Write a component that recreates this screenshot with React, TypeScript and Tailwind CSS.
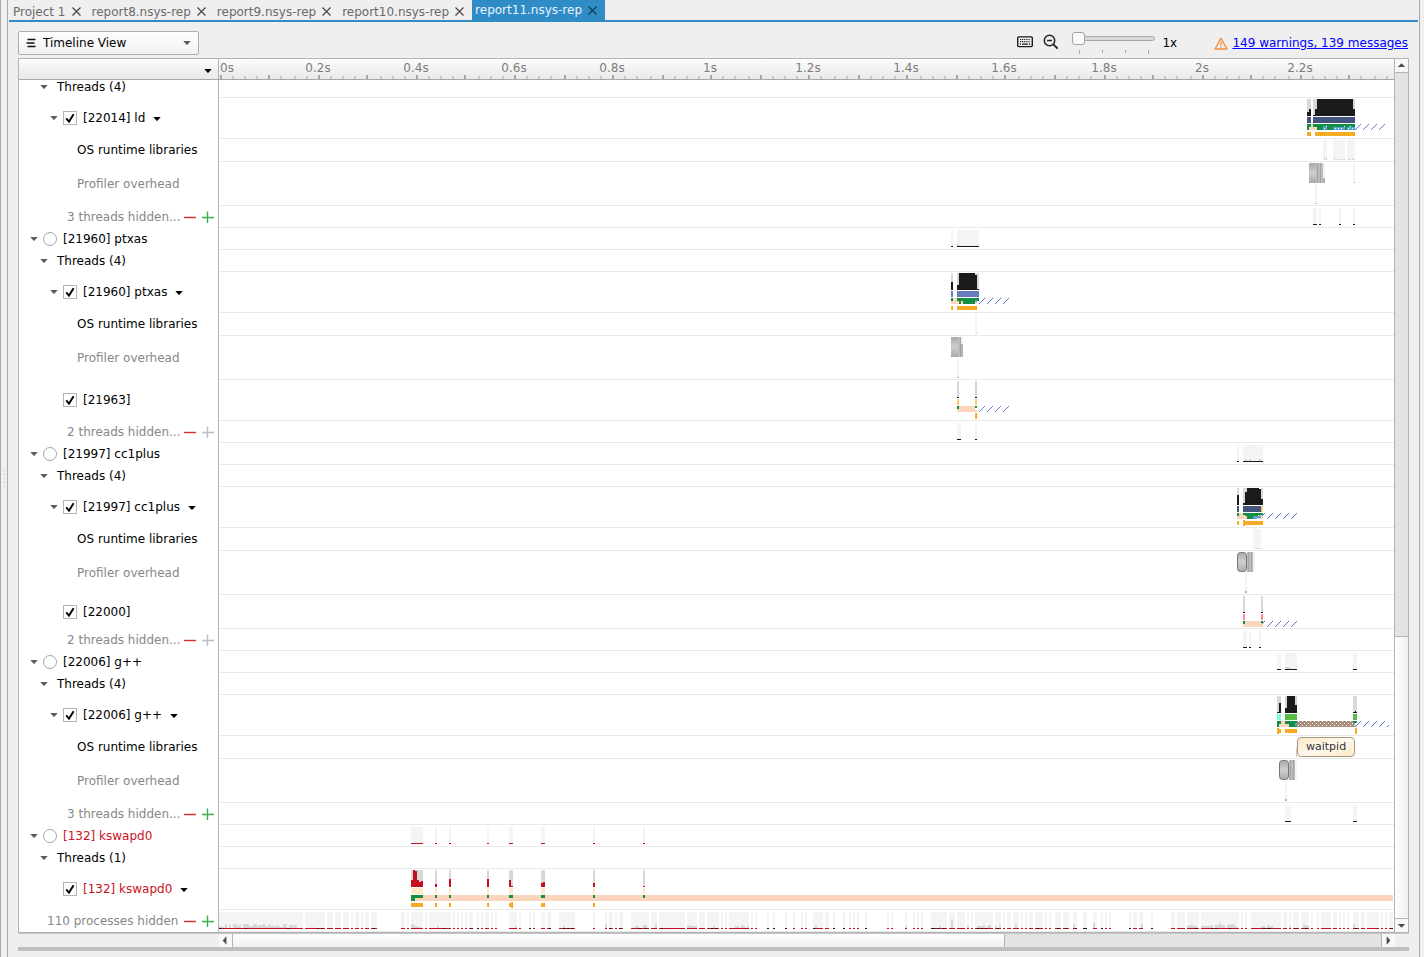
import React from "react";

const SHADE = "#f4f4f4";
const GREY = "#d8d8d8";
const BLACK = "#1a1a1a";
const RED = "#c50f1f";
const GREEN = "#138f45";
const PEACH = "#fcd5bd";
const BLUE = "#5c9fd2";
const NAVY = "#45547f";
const BEIGE = "#d8cdb8";
const HATCH = "#6577d6";
const SAMPLES = "url(#samples)";
const METAL = "url(#metal)";
const LINES = "url(#metal-lines)";

/** x, y, width, height, fill */
type Block = [number, number, number, number, string];
type Kind = "process" | "group" | "thread" | "leaf" | "muted" | "hidden" | "total";

interface Row {
  kind: Kind;
  label: string;
  size: string;
  red?: boolean;
  expandable?: boolean;
  menu?: boolean;
  plusOff?: boolean;
  blocks?: Block[];
  hatches?: number[];
  capsule?: number;
  tip?: string;
}

const at = (origin: number, blocks: Block[]): Block[] =>
  blocks.map(([x, y, w, h, f]) => [x + origin, y, w, h, f]);

/** Activity summary: a shaded column with a one-pixel base line. */
const summary = (origin: number, spans: [number, number][], base = BLACK): Block[] =>
  spans.flatMap(([a, b]): Block[] => [
    [origin + a, 2, b - a, 16, SHADE],
    [origin + a, 18, b - a, 1, base],
  ]);

const dots = (xs: number[], y: number, color: string): Block[] =>
  xs.map((x): Block => [x, y, 1, 1, color]);

const LD = 1071;
const PTXAS = 711;
const CC1 = 1001;
const GPP = 1041;
const SWAP = 181;

const swapSpans: [number, number][] = [
  [11, 23], [35, 37], [49, 51], [87, 89], [109, 113], [141, 145], [193, 195], [243, 245],
];

const totalSpans: [number, number][] = [
  [0, 84], [86, 106], [108, 114], [116, 122], [124, 130], [132, 134], [136, 140], [142, 144], [146, 150], [152, 158],
  [182, 186], [188, 190], [192, 204], [206, 208], [210, 232], [234, 236], [238, 240], [242, 244], [246, 248], [250, 254],
  [258, 260], [262, 264], [266, 270], [272, 274], [276, 278], [290, 298], [300, 302], [310, 312], [314, 316], [322, 326],
  [328, 332], [340, 356], [374, 376], [386, 388], [390, 394], [396, 398], [400, 404], [412, 430], [432, 438], [440, 466],
  [468, 478], [480, 486], [488, 500], [502, 504], [506, 508], [510, 530], [532, 534], [536, 538], [548, 550], [554, 556],
  [566, 568], [574, 576], [582, 584], [586, 588], [594, 604], [606, 610], [614, 616], [624, 626], [630, 632], [634, 636],
  [638, 640], [646, 648], [668, 670], [672, 674], [686, 688], [694, 696], [698, 700], [702, 704], [712, 728], [730, 736],
  [738, 746], [748, 750], [752, 754], [756, 774], [776, 782], [784, 786], [788, 792], [794, 800], [802, 804], [806, 808],
  [810, 814], [816, 824], [826, 828], [830, 832], [836, 842], [844, 850], [854, 858], [864, 868], [874, 878], [882, 884],
  [886, 888], [890, 892], [910, 912], [914, 918], [920, 924], [932, 934], [952, 956], [958, 966], [968, 980], [982, 1020],
  [1022, 1024], [1026, 1028], [1032, 1062], [1064, 1068], [1070, 1072], [1074, 1080], [1082, 1090], [1092, 1094],
  [1098, 1100], [1102, 1112], [1114, 1118], [1120, 1122], [1124, 1126], [1128, 1130], [1134, 1140], [1142, 1146],
  [1148, 1160], [1162, 1164], [1166, 1168], [1170, 1174],
];

const totalBlack: [number, number][] = [
  [0, 2], [26, 28], [68, 70], [98, 100], [102, 104], [154, 156], [224, 226], [252, 254], [258, 260], [310, 312],
  [330, 332], [344, 346], [348, 350], [352, 354], [390, 392], [400, 402], [420, 422], [426, 428], [442, 444], [492, 494],
  [496, 498], [548, 550], [554, 556], [566, 568], [594, 596], [614, 616], [624, 626], [646, 648], [712, 716], [718, 720],
  [724, 726], [758, 760], [762, 764], [766, 768], [778, 780], [818, 820], [838, 840], [846, 848], [856, 858], [864, 868],
  [882, 884], [910, 912], [932, 934], [976, 978], [992, 994], [996, 998], [1010, 1012], [1044, 1046], [1048, 1052],
  [1076, 1078], [1086, 1088], [1136, 1138], [1172, 1174],
];

/** x, width, height of the load bumps that stand on the base line */
const totalBumps: [number, number, number][] = [
  [0, 2, 2], [2, 4, 1], [6, 2, 4], [10, 2, 3], [14, 4, 4], [18, 2, 2], [20, 2, 3], [24, 6, 4], [30, 4, 2], [34, 4, 4],
  [38, 2, 2], [40, 4, 3], [44, 2, 4], [46, 4, 2], [50, 2, 4], [52, 6, 2], [58, 2, 3], [60, 4, 1], [64, 4, 4], [70, 8, 3],
  [92, 2, 1], [192, 2, 4], [194, 2, 3], [196, 2, 2], [198, 4, 1], [218, 2, 2], [296, 2, 2], [344, 2, 2], [386, 2, 4],
  [416, 4, 2], [424, 4, 3], [436, 2, 4], [468, 2, 2], [470, 2, 3], [472, 6, 2], [494, 2, 2], [516, 4, 2], [522, 2, 3],
  [524, 2, 2], [528, 2, 2], [596, 2, 2], [686, 2, 2], [720, 2, 2], [732, 2, 9], [748, 2, 2], [758, 6, 2], [764, 2, 3],
  [768, 2, 2], [770, 2, 3], [776, 2, 2], [780, 2, 3], [796, 2, 4], [854, 2, 4], [874, 2, 5], [922, 2, 4], [968, 2, 2],
  [970, 4, 3], [974, 4, 2], [982, 10, 2], [992, 2, 3], [996, 4, 3], [1000, 2, 5], [1002, 4, 3], [1008, 2, 3], [1010, 6, 4],
  [1016, 2, 2], [1042, 4, 2], [1048, 2, 3], [1050, 4, 2], [1070, 2, 2], [1084, 4, 3], [1088, 2, 2], [1134, 2, 4],
];

const rows: Row[] = [
  { kind: "group", label: "Threads (4)", size: "h-[18px]" },
  {
    kind: "thread", label: "[22014] ld", size: "h-[41px]", expandable: true, menu: true,
    blocks: at(LD, [
      [17, 1, 4, 17, GREY], [17, 14, 2, 4, BLACK], [19, 11, 2, 7, BLACK],
      [23, 1, 4, 17, GREY], [23, 17, 2, 1, BLACK], [25, 11, 2, 7, BLACK], [27, 1, 36, 17, BLACK],
      [63, 1, 2, 10, GREY], [63, 11, 2, 7, BLACK],
      [17, 19, 4, 6, NAVY], [23, 19, 42, 6, NAVY],
      [17, 26, 48, 6, GREEN], [21, 26, 2, 6, PEACH], [19, 29, 8, 3, PEACH],
      [33, 28, 4, 4, BLUE], [43, 29, 12, 3, BLUE], [57, 29, 8, 3, BLUE], [59, 28, 2, 1, BLUE],
      ...dots([34, 45, 48, 51, 58, 62], 30, "#fff"), ...dots([36, 54, 60], 28, "#fff"),
      [17, 34, 4, 4, SAMPLES], [25, 34, 40, 4, SAMPLES],
    ]),
    hatches: [1136, 1144, 1152, 1160],
  },
  {
    kind: "leaf", label: "OS runtime libraries", size: "h-[23px]",
    blocks: at(LD, [
      [33, 1, 4, 20, SHADE], [43, 1, 12, 20, SHADE], [57, 1, 8, 20, SHADE],
      [34, 19, 1, 2, BEIGE], [36, 18, 1, 3, BEIGE], [62, 19, 1, 2, BEIGE],
      ...dots([44, 46, 48, 50, 52, 54, 58, 60, 64], 20, BEIGE),
    ]),
  },
  {
    kind: "muted", label: "Profiler overhead", size: "h-[44px]",
    blocks: at(LD, [
      [19, 1, 7, 20, METAL], [26, 1, 7, 20, LINES], [33, 1, 2, 15, SHADE], [33, 16, 2, 5, "#b0b0b0"],
      [63, 1, 2, 20, SHADE], [64, 20, 1, 1, "#aaa"], [25, 22, 2, 20, SHADE], [25, 41, 2, 1, "#bbb"],
    ]),
  },
  { kind: "hidden", label: "3 threads hidden...", size: "h-[22px]", blocks: summary(LD, [[23, 27], [29, 31], [49, 51], [63, 65]]) },
  {
    kind: "process", label: "[21960] ptxas", size: "h-[22px]",
    blocks: [...summary(PTXAS, [[21, 23], [27, 49]]), ...at(PTXAS, [[27, 16, 2, 2, GREY], [29, 17, 2, 1, GREY], [45, 17, 2, 1, GREY]])],
  },
  { kind: "group", label: "Threads (4)", size: "h-[22px]" },
  {
    kind: "thread", label: "[21960] ptxas", size: "h-[41px]", expandable: true, menu: true,
    blocks: at(PTXAS, [
      [21, 1, 2, 9, GREY], [21, 10, 2, 8, BLACK], [27, 1, 2, 12, GREY], [27, 13, 2, 5, BLACK], [29, 1, 16, 17, BLACK],
      [45, 1, 4, 16, GREY], [45, 3, 2, 15, BLACK], [47, 17, 2, 1, BLACK],
      [21, 19, 2, 6, "#657dc0"], [27, 19, 22, 6, "#657dc0"],
      [21, 26, 26, 6, PEACH], [21, 26, 2, 3, GREEN], [27, 26, 22, 3, GREEN], [29, 29, 2, 3, GREEN], [33, 29, 12, 3, GREEN],
      [45, 28, 2, 2, BLUE], [21, 34, 2, 4, SAMPLES], [27, 34, 20, 4, SAMPLES],
    ]),
    hatches: [760, 768, 776, 784],
  },
  { kind: "leaf", label: "OS runtime libraries", size: "h-[23px]", blocks: at(PTXAS, [[45, 1, 2, 20, SHADE], [46, 20, 1, 1, BEIGE]]) },
  {
    kind: "muted", label: "Profiler overhead", size: "h-[44px]",
    blocks: at(PTXAS, [
      [21, 1, 7, 20, METAL], [28, 1, 3, 20, LINES], [31, 1, 2, 7, SHADE], [31, 8, 2, 13, "#b4b4b4"],
      [27, 22, 2, 20, SHADE], [27, 41, 2, 1, "#bbb"],
    ]),
  },
  {
    kind: "thread", label: "[21963]", size: "h-[41px]",
    blocks: at(PTXAS, [
      [27, 1, 2, 16, GREY], [27, 17, 2, 1, BLACK], [45, 1, 2, 16, GREY], [45, 17, 2, 1, BLACK],
      [27, 19, 2, 6, "#ffca70"], [45, 19, 2, 6, "#ffca70"], [27, 26, 20, 6, PEACH], [27, 26, 2, 3, GREEN],
      [45, 26, 2, 2, GREEN], [45, 28, 2, 2, "#fff"], [45, 33, 2, 6, SAMPLES],
    ]),
    hatches: [760, 768, 776, 784],
  },
  { kind: "hidden", label: "2 threads hidden...", size: "h-[22px]", plusOff: true, blocks: summary(PTXAS, [[27, 31], [45, 47]]) },
  {
    kind: "process", label: "[21997] cc1plus", size: "h-[22px]",
    blocks: [...summary(CC1, [[17, 19], [23, 43]]), ...at(CC1, [[25, 16, 2, 2, GREY], [29, 16, 2, 2, GREY], [39, 16, 2, 2, GREY]])],
  },
  { kind: "group", label: "Threads (4)", size: "h-[22px]" },
  {
    kind: "thread", label: "[21997] cc1plus", size: "h-[41px]", expandable: true, menu: true,
    blocks: at(CC1, [
      [17, 1, 2, 7, GREY], [17, 8, 2, 10, BLACK], [23, 1, 4, 17, GREY], [23, 16, 2, 2, BLACK], [25, 5, 2, 13, BLACK],
      [27, 1, 12, 17, BLACK], [39, 2, 2, 16, BLACK], [41, 1, 2, 11, GREY], [41, 12, 2, 6, BLACK],
      [17, 19, 2, 6, NAVY], [23, 19, 18, 6, NAVY], [41, 19, 2, 6, "#ffca70"],
      [17, 26, 26, 6, PEACH], [17, 26, 2, 3, GREEN], [23, 26, 20, 2, GREEN], [25, 28, 16, 1, GREEN], [27, 28, 6, 4, GREEN],
      [33, 29, 8, 2, BLUE], [33, 31, 4, 1, BLUE], ...dots([38, 40, 42], 28, "#fff"),
      ...dots([42], 28, HATCH), ...dots([43], 27, HATCH), ...dots([44], 26, HATCH),
      [17, 34, 2, 4, SAMPLES], [23, 33, 2, 6, SAMPLES], [25, 34, 18, 4, SAMPLES],
    ]),
    hatches: [1048, 1056, 1064, 1072],
  },
  {
    kind: "leaf", label: "OS runtime libraries", size: "h-[23px]",
    blocks: at(CC1, [[33, 1, 8, 20, SHADE], ...dots([34, 36, 38, 40], 20, BEIGE)]),
  },
  {
    kind: "muted", label: "Profiler overhead", size: "h-[44px]", capsule: 1018,
    blocks: at(CC1, [[27, 1, 6, 20, LINES], [33, 1, 2, 20, SHADE], [25, 22, 2, 20, SHADE], [25, 40, 2, 2, "#b4b4b4"]]),
  },
  {
    kind: "thread", label: "[22000]", size: "h-[34px]",
    blocks: at(CC1, [
      [23, 1, 2, 16, GREY], [23, 17, 2, 1, BLACK], [41, 1, 2, 16, GREY], [41, 17, 2, 1, BLACK],
      [23, 19, 2, 6, "#ff8b92"], [41, 19, 2, 6, "#ff8b92"], [23, 26, 20, 6, PEACH], [23, 26, 2, 3, GREEN], [41, 26, 2, 2, GREEN],
      ...dots([42], 28, HATCH), ...dots([43], 27, HATCH), ...dots([44], 26, HATCH),
    ]),
    hatches: [1048, 1056, 1064, 1072],
  },
  { kind: "hidden", label: "2 threads hidden...", size: "h-[22px]", plusOff: true, blocks: summary(CC1, [[23, 27], [29, 31], [39, 41]]) },
  {
    kind: "process", label: "[22006] g++", size: "h-[22px]",
    blocks: [...summary(GPP, [[17, 21], [25, 37], [93, 97]]), ...at(GPP, [[25, 16, 4, 2, GREY], [29, 17, 2, 1, GREY], [93, 17, 2, 1, GREY]])],
  },
  { kind: "group", label: "Threads (4)", size: "h-[22px]" },
  {
    kind: "thread", label: "[22006] g++", size: "h-[41px]", expandable: true, menu: true,
    blocks: at(GPP, [
      [17, 1, 4, 16, GREY], [17, 17, 2, 1, BLACK], [19, 8, 2, 10, BLACK], [25, 1, 2, 12, GREY], [25, 13, 2, 5, BLACK],
      [27, 1, 8, 17, BLACK], [35, 1, 2, 9, GREY], [35, 10, 2, 8, BLACK], [93, 1, 4, 16, GREY], [93, 17, 4, 1, BLACK], [95, 16, 1, 1, BLACK],
      [17, 19, 4, 6, "#7fffd4"], [25, 19, 12, 6, "#55bd47"], [93, 19, 4, 6, "#55bd47"],
      [17, 26, 20, 6, GREEN], [21, 26, 4, 6, PEACH], [19, 29, 10, 3, PEACH], [35, 28, 2, 3, BLUE],
      [37, 26, 58, 6, "url(#weave)"], [93, 26, 4, 2, GREEN], [95, 30, 2, 2, PEACH], [93, 29, 1, 1, BLUE],
      [17, 33, 2, 6, SAMPLES], [19, 34, 2, 4, SAMPLES], [25, 34, 12, 4, SAMPLES], [95, 33, 2, 6, SAMPLES],
      ...dots([127], 31, HATCH), ...dots([128], 30, HATCH),
    ]),
    hatches: [1136, 1144, 1152, 1160],
  },
  { kind: "leaf", label: "OS runtime libraries", size: "h-[23px]", tip: "waitpid", blocks: at(GPP, [[36, 1, 1, 20, SHADE], [36, 12, 1, 9, BEIGE]]) },
  {
    kind: "muted", label: "Profiler overhead", size: "h-[44px]", capsule: 1060,
    blocks: at(GPP, [[29, 1, 6, 20, LINES], [35, 1, 2, 20, SHADE], [25, 22, 2, 20, SHADE], [25, 40, 2, 2, "#b4b4b4"]]),
  },
  { kind: "hidden", label: "3 threads hidden...", size: "h-[22px]", blocks: summary(GPP, [[25, 31], [93, 97]]) },
  { kind: "process", label: "[132] kswapd0", size: "h-[22px]", red: true, blocks: summary(SWAP, swapSpans, RED) },
  { kind: "group", label: "Threads (1)", size: "h-[22px]" },
  {
    kind: "thread", label: "[132] kswapd0", size: "h-[41px]", red: true, menu: true,
    blocks: at(SWAP, [
      [11, 26, 982, 6, PEACH],
      ...swapSpans.flatMap(([a, b]): Block[] => [
        [a, 1, b - a, 17, GREY], [a, 19, b - a, 6, "#ffe8c8"], [a, 26, b - a, 3, GREEN],
      ]),
      [11, 29, 4, 3, GREEN],
      [11, 11, 2, 7, RED], [13, 1, 2, 17, RED], [15, 2, 2, 16, RED], [17, 11, 2, 7, RED], [19, 13, 2, 5, RED], [21, 12, 2, 6, RED],
      [35, 15, 2, 3, RED], [49, 10, 2, 8, RED], [87, 10, 2, 8, RED], [109, 11, 2, 7, RED], [111, 17, 2, 1, RED],
      [141, 14, 2, 4, RED], [143, 13, 2, 5, RED], [193, 14, 2, 4, RED], [243, 17, 2, 1, RED],
      [11, 34, 12, 4, SAMPLES], [35, 34, 2, 4, SAMPLES], [49, 34, 2, 4, SAMPLES], [87, 34, 2, 4, SAMPLES],
      [109, 34, 2, 4, SAMPLES], [111, 33, 2, 6, SAMPLES], [141, 34, 4, 4, SAMPLES], [193, 34, 2, 4, SAMPLES],
    ]),
  },
  {
    kind: "total", label: "110 processes hidden", size: "h-[22px]",
    blocks: [
      ...summary(0, totalSpans, RED),
      ...totalBumps.map(([x, w, h]): Block => [x, 18 - h, w, h, GREY]),
      ...totalBlack.map(([a, b]): Block => [a, 18, b - a, 1, BLACK]),
    ],
  },
];

function Caret({ className }: { className: string }) {
  return (
    <svg viewBox="0 0 8 4" className={`h-1 w-2 shrink-0 ${className}`} aria-hidden="true">
      <path d="M.3 0h7.400L4.600 3.600Q4 4.200 3.400 3.600Z" fill="currentColor" />
    </svg>
  );
}

function Toggle() {
  return (
    <button type="button" aria-label="Collapse" className="flex h-4 w-2 shrink-0 items-center">
      <Caret className="text-[#5c5c5c]" />
    </button>
  );
}

function HideButtons({ plusOff }: { plusOff?: boolean }) {
  return (
    <span className="ml-auto flex gap-[6px] pr-1">
      <button type="button" aria-label="Show fewer" className="text-[#e0272c]">
        <svg viewBox="0 0 12 12" className="size-3" fill="none" stroke="currentColor" strokeWidth="1.4">
          <path d="M0 6.5H12" />
        </svg>
      </button>
      <button type="button" aria-label="Show more" disabled={plusOff} className={plusOff ? "text-[#bdbdbd]" : "text-[#3fae49]"}>
        <svg viewBox="0 0 12 12" className="size-3" fill="none" stroke="currentColor" strokeWidth="1.4">
          <path d="M0 6.5H12M5.5 .5V12" />
        </svg>
      </button>
    </span>
  );
}

function RowLabel({ row, id }: { row: Row; id: string }) {
  const tone = row.red ? "text-[#cc1122]" : "text-black";
  if (row.kind === "process") {
    return (
      <div className="flex h-[22px] items-center pl-[11px]">
        <Toggle />
        <input id={id} type="radio" name="process" className="ml-[5px] size-[14px] shrink-0 appearance-none rounded-full border border-[#a4a4a4] bg-white" />
        <label htmlFor={id} className={`ml-[6px] ${tone}`}>{row.label}</label>
      </div>
    );
  }
  if (row.kind === "group") {
    return (
      <div className="flex h-[22px] shrink-0 items-center pl-[21px]">
        <Toggle />
        <span className="ml-[9px]">{row.label}</span>
      </div>
    );
  }
  if (row.kind === "thread") {
    return (
      <div className="flex items-center pb-px pl-[31px]">
        {row.expandable ? <Toggle /> : <span className="w-2" />}
        <span className="relative ml-[5px] size-[14px] shrink-0">
          <input id={id} type="checkbox" defaultChecked className="peer block size-[14px] appearance-none border border-[#b4b4b4] bg-white" />
          <svg viewBox="0 0 14 14" className="pointer-events-none absolute inset-0 hidden size-[14px] peer-checked:block" aria-hidden="true">
            <path d="M3.2 7.4L6 10.6L10.6 3.2" fill="none" stroke="#000" strokeWidth="1.9" />
          </svg>
        </span>
        <label htmlFor={id} className={`ml-[6px] ${tone}`}>{row.label}</label>
        {row.menu && (
          <button type="button" aria-label={`Actions for ${row.label}`} className="ml-2 flex h-4 items-center pt-[2px]">
            <Caret className="text-black" />
          </button>
        )}
      </div>
    );
  }
  if (row.kind === "hidden" || row.kind === "total") {
    return (
      <div className={`flex items-center text-[#878787] ${row.kind === "total" ? "pl-7" : "pl-12"}`}>
        <span>{row.label}</span>
        <HideButtons plusOff={row.plusOff} />
      </div>
    );
  }
  return <div className={`pl-[58px] ${row.kind === "muted" ? "text-[#878787]" : "pb-px"}`}>{row.label}</div>;
}

function Track({ row }: { row: Row }) {
  return (
    <div className="relative min-w-0 flex-1 border-b border-[#e9e9e9]">
      <svg className="block h-full w-full" shapeRendering="crispEdges" aria-hidden="true">
        {row.blocks?.map(([x, y, w, h, fill], i) => (
          <rect key={i} x={x} y={y} width={w} height={h} fill={fill} />
        ))}
        {row.hatches?.map((x) => (
          <path key={x} d={`M${x} 32L${x + 6} 26`} stroke={HATCH} fill="none" />
        ))}
        {row.capsule !== undefined && (
          <rect x={row.capsule + 0.5} y="1.5" width="9" height="19" rx="3" fill={METAL} stroke="#767676" shapeRendering="auto" />
        )}
      </svg>
      {row.tip && (
        <div role="tooltip" className="absolute left-[1078px] top-px z-10 flex h-5 items-center rounded-[4px] border border-[#ab9a82] bg-linear-to-br from-[#fde8ca] via-[#fff8ec] to-[#fde8ca] px-2 pb-[2px] text-[11px] leading-none text-[#333]">
          {row.tip}
        </div>
      )}
    </div>
  );
}

const TENTH = 49.09;
const snap = (v: number) => 1 + 2 * Math.floor((v + 0.5) / 2);
const ticks = Array.from({ length: 96 }, (_, i) => ({ x: snap((i * TENTH) / 4), major: i % 4 === 0 }));
const marks = ["0.2s", "0.4s", "0.6s", "0.8s", "1s", "1.2s", "1.4s", "1.6s", "1.8s", "2s", "2.2s"];

function Ruler() {
  return (
    <svg className="block h-5 min-w-0 flex-1" aria-label="Time axis" fontSize="12" fill="#7d7d7d">
      <text x="1" y="13">0s</text>
      {marks.map((m, i) => (
        <text key={m} x={snap((i + 1) * 2 * TENTH)} y="13" textAnchor="middle">{m}</text>
      ))}
      {ticks.map(({ x, major }) => (
        <rect key={x} x={x} y={major ? 16 : 17} width="2" height={major ? 4 : 3} fill={major ? "#a6a6a6" : "#c8c8c8"} />
      ))}
    </svg>
  );
}

const arrows = { up: "M3 8L7 4L11 8Z", down: "M3 5L7 9L11 5Z", left: "M8 2L4 6.5L8 11Z", right: "M5 2L9 6.5L5 11Z" };

function ScrollButton({ dir, className }: { dir: keyof typeof arrows; className: string }) {
  return (
    <button type="button" aria-label={`Scroll ${dir}`} className={`shrink-0 bg-[#f8f8f8] ${className}`}>
      <svg viewBox="0 0 14 13" className="h-[13px] w-[13px]" aria-hidden="true">
        <path d={arrows[dir]} fill="#4c4c4c" />
      </svg>
    </button>
  );
}

function Cross() {
  return (
    <svg viewBox="0 0 9 9" className="size-[9px]" fill="none" stroke="currentColor" strokeWidth="1.3" aria-hidden="true">
      <path d="M.5 .5L8.5 8.5M8.5 .5L.5 8.5" />
    </svg>
  );
}

const tabs = ["Project 1", "report8.nsys-rep", "report9.nsys-rep", "report10.nsys-rep", "report11.nsys-rep"];

function TabBar() {
  return (
    <nav className="mx-px flex h-[22px] border-b-2 border-[#308cc6] pl-px">
      {tabs.map((tab, i) => {
        const active = i === tabs.length - 1;
        return (
          <div key={tab} className={`flex items-center gap-[6px] pl-[3px] pr-2 ${active ? "bg-[#308cc6] text-[#e6f3fb]" : "pt-[3px] text-[#6a6a6a]"}`}>
            <button type="button">{tab}</button>
            <button type="button" aria-label={`Close ${tab}`} className={active ? "text-[#123f5e]" : "text-[#4a4a4a]"}>
              <Cross />
            </button>
          </div>
        );
      })}
    </nav>
  );
}

function Toolbar() {
  return (
    <div className="flex h-9 items-center pt-[6px]">
      <div className="relative">
        <select aria-label="View" className="block h-6 w-[181px] appearance-none rounded-[2px] border border-[#adadad] bg-linear-to-b from-white to-[#f1f1f1] pl-6 text-black">
          <option>Timeline View</option>
        </select>
        <svg viewBox="0 0 10 10" className="pointer-events-none absolute left-[8px] top-[7px] size-[10px]" stroke="#111" strokeWidth="1.5" aria-hidden="true">
          <path d="M1.5 1.5H9.500M.5 5H8.500M1.5 8.500H9.500" />
        </svg>
        <span className="pointer-events-none absolute right-2 top-[10px]">
          <Caret className="block text-[#5c5c5c]" />
        </span>
      </div>
      <button type="button" aria-label="Keyboard shortcuts" className="mb-[2px] ml-auto">
        <svg viewBox="0 0 16 12" className="block h-3 w-4" fill="none" stroke="#1a1a1a" aria-hidden="true">
          <rect x=".7" y=".9" width="14.600" height="9.700" rx="1" strokeWidth="1.400" />
          <path d="M3 3.500H13.500M3 5.600H13.500" strokeWidth="1.200" strokeDasharray="1.200 .9" />
          <path d="M2.800 8.200H4M5 8.200H11M12 8.200H13.200" strokeWidth="1.200" />
        </svg>
      </button>
      <button type="button" aria-label="Zoom out" className="mb-[2px] ml-[10px]">
        <svg viewBox="0 0 16 16" className="block size-4" fill="none" stroke="#222" aria-hidden="true">
          <circle cx="6.500" cy="6.500" r="5.200" strokeWidth="1.500" />
          <path d="M10.300 10.300L14.700 14.700" strokeWidth="1.900" />
          <path d="M4 6.500H9" strokeWidth="1.500" />
        </svg>
      </button>
      <div className="ml-[13px] w-[83px] pb-px">
        <input
          type="range" min="1" max="100" defaultValue="1" aria-label="Zoom level"
          className="block h-[14px] w-full appearance-none bg-transparent [&::-webkit-slider-runnable-track]:h-[5px] [&::-webkit-slider-runnable-track]:rounded-[3px] [&::-webkit-slider-runnable-track]:border [&::-webkit-slider-runnable-track]:border-[#a8a8a8] [&::-webkit-slider-runnable-track]:bg-[#d8d8d8] [&::-webkit-slider-thumb]:ml-[-1px] [&::-webkit-slider-thumb]:mt-[-5px] [&::-webkit-slider-thumb]:size-[13px] [&::-webkit-slider-thumb]:appearance-none [&::-webkit-slider-thumb]:rounded-[3px] [&::-webkit-slider-thumb]:border [&::-webkit-slider-thumb]:border-[#a4a4a4] [&::-webkit-slider-thumb]:bg-[#fbfbfb]"
        />
        <div className="mt-1 flex h-1 justify-between pl-[7px] pr-[6px]" aria-hidden="true">
          <i className="w-px bg-[#a8a8a8]" />
          <i className="h-[3px] w-px bg-[#a8a8a8]" />
          <i className="h-[3px] w-px bg-[#a8a8a8]" />
          <i className="w-px bg-[#a8a8a8]" />
        </div>
      </div>
      <span className="ml-[7px] w-[52px]">1x</span>
      <svg viewBox="0 0 14 13" className="h-[13px] w-[14px]" fill="none" stroke="#f58a36" aria-hidden="true">
        <path d="M7 1.200L13 12H1Z" strokeWidth="1.300" strokeLinejoin="round" />
        <path d="M7 4.800V8.500M7 9.500V10.800" strokeWidth="1.300" />
      </svg>
      <a href="#messages" className="ml-1 mr-px text-[#0000ff] underline">149 warnings, 139 messages</a>
    </div>
  );
}

export default function App() {
  return (
    <div className="flex min-h-screen bg-[#efefef] font-['DejaVu_Sans',sans-serif] text-[12px] leading-4 text-black">
      <svg className="absolute size-0" aria-hidden="true">
        <defs>
          <pattern id="samples" width="2" height="4" patternUnits="userSpaceOnUse">
            <rect width="2" height="4" fill="#ffa500" />
            <rect width="1" height="4" fill="#eeb04a" />
          </pattern>
          <pattern id="weave" width="4" height="4" patternUnits="userSpaceOnUse">
            <rect width="4" height="4" fill="#a78b7b" />
            <rect x="1" y="0" width="1" height="1" fill="#fff" />
            <rect x="3" y="2" width="1" height="1" fill="#fff" />
          </pattern>
          <linearGradient id="metal" x1="0" y1="0" x2="0" y2="1">
            <stop offset="0" stopColor="#a9a9a9" />
            <stop offset=".5" stopColor="#cfcfcf" />
            <stop offset="1" stopColor="#a9a9a9" />
          </linearGradient>
          <pattern id="metal-lines" width="3" height="24" patternUnits="userSpaceOnUse">
            <rect width="3" height="24" fill="#bdbdbd" />
            <rect width="1" height="24" fill="#a4a4a4" />
          </pattern>
        </defs>
      </svg>

      <div className="flex w-2 shrink-0 flex-col items-center justify-center gap-[3px] border-x border-[#a9a9a9]" aria-hidden="true">
        {[0, 1, 2, 3, 4].map((n) => (
          <i key={n} className="size-px bg-[#b4b4b4]" />
        ))}
      </div>

      <main className="min-w-0 flex-1">
        <TabBar />
        <div className="px-[10px]">
          <Toolbar />

          <section className="flex border border-[#b4b4b4] bg-white" aria-label="Timeline">
            <div className="min-w-0 flex-1">
              <div className="flex h-[21px] border-b border-[#a8a8a8] bg-linear-to-b from-[#fcfcfc] to-[#e9e9e9]">
                <div className="flex w-[200px] shrink-0 items-center justify-end border-r border-[#b4b4b4] pr-[6px] pt-1">
                  <button type="button" aria-label="Column options">
                    <Caret className="block text-black" />
                  </button>
                </div>
                <Ruler />
              </div>
              {rows.map((row, i) => (
                <div key={i} className={`flex overflow-x-clip ${row.size}`}>
                  <div className={`flex w-[200px] shrink-0 flex-col whitespace-nowrap border-r border-[#b4b4b4] ${row.kind === "group" ? "justify-end overflow-hidden" : "justify-center"}`}>
                    <RowLabel row={row} id={`row-${i}`} />
                  </div>
                  <Track row={row} />
                </div>
              ))}
            </div>
            <div className="flex w-[14px] shrink-0 flex-col border-l border-[#b4b4b4]">
              <ScrollButton dir="up" className="h-[14px] border-b border-[#b4b4b4]" />
              <div className="flex-[564] bg-[#e3e3e3]" />
              <div className="flex-[281] border-y border-[#b4b4b4] bg-linear-to-r from-white to-[#f0f0f0]" />
              <ScrollButton dir="down" className="h-[13px]" />
            </div>
          </section>

          <div className="flex h-[14px] border-t border-[#c4c4c4] pl-[201px] pr-[14px]">
            <ScrollButton dir="left" className="border-r border-[#b4b4b4]" />
            <div className="flex-[771] border-r border-[#b4b4b4] bg-linear-to-b from-white to-[#f0f0f0]" />
            <div className="flex-[376] border-r border-[#b4b4b4] bg-[#e3e3e3]" />
            <ScrollButton dir="right" className="" />
          </div>
          <div className="h-1 bg-[#bfbfbf]" />
        </div>
      </main>

      <div className="w-[5px] shrink-0 border-l border-[#a9a9a9]" aria-hidden="true" />
    </div>
  );
}
